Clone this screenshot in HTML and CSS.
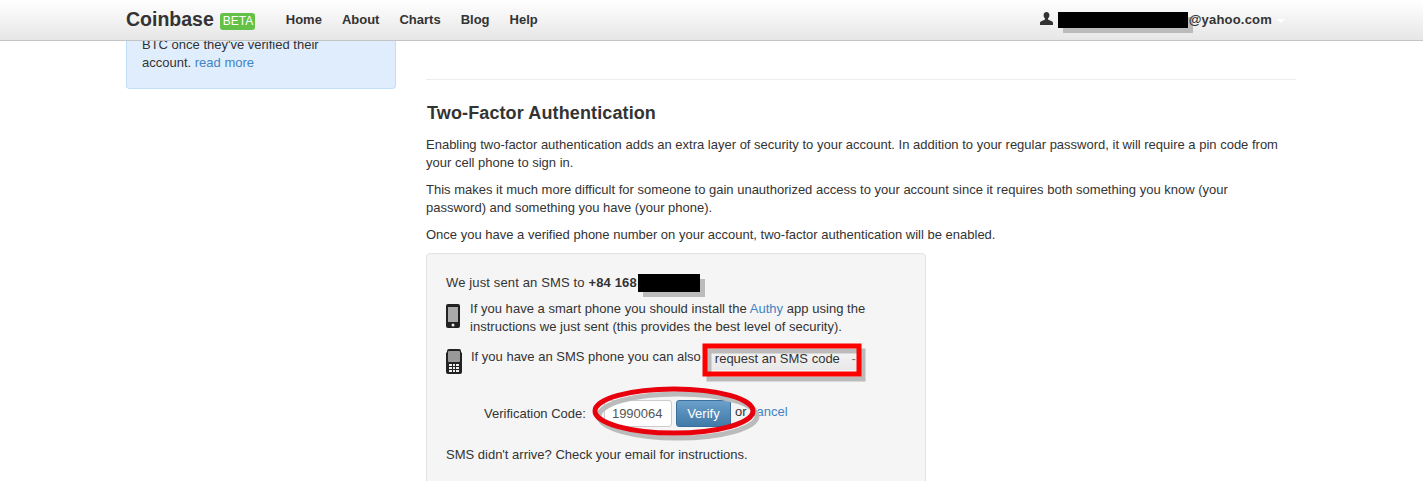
FILE: index.html
```html
<!DOCTYPE html>
<html lang="en">
<head>
<meta charset="utf-8">
<title>Coinbase</title>
<link rel="stylesheet" href="styles.css">
</head>
<body>
<header class="navbar">
  <div class="container nav-inner">
    <a class="brand">Coinbase</a>
    <span class="beta">BETA</span>
    <nav class="nav-links"><a>Home</a><a>About</a><a>Charts</a><a>Blog</a><a>Help</a></nav>
    <div class="user">
      <svg class="user-icon" width="13" height="13" viewBox="0 0 13 13"><path d="M6.500 0C4.600 0 3.600 1.400 3.600 3.300c0 1.300.5 2.500 1.400 3.200v1L.8 9.600C.3 9.900 0 10.300 0 10.900V13h13v-2.100c0-.6-.3-1-.8-1.300L8 7.500v-1c.9-.7 1.400-1.900 1.400-3.200C9.400 1.400 8.400 0 6.500 0z" fill="#333"/></svg>
      <span class="redact-wrap"></span><span class="email">@yahoo.com</span>
      <span class="caret"></span>
    </div>
  </div>
</header>
<div class="container page">
  <aside class="sidebar">
    <div class="info">BTC once they've verified their<br>account. <a>read more</a></div>
  </aside>
  <main class="main">
    <hr class="rule">
    <h2>Two-Factor Authentication</h2>
    <p>Enabling two-factor authentication adds an extra layer of security to your account. In addition to your regular password, it will require a pin code from your cell phone to sign in.</p>
    <p>This makes it much more difficult for someone to gain unauthorized access to your account since it requires both something you know (your password) and something you have (your phone).</p>
    <p>Once you have a verified phone number on your account, two-factor authentication will be enabled.</p>
    <section class="well">
      <div class="sent">We just sent an SMS to <b>+84 168</b><span class="redact-phone"></span></div>
      <div class="row smart">
        <svg width="14" height="24" viewBox="0 0 14 24"><rect width="14" height="24" rx="2" fill="#222"/><rect x="2" y="3" width="10" height="15" fill="#aaa"/><rect x="5.500" y="19.500" width="3" height="3" rx="1.500" fill="#eee"/></svg>
        <div>If you have a smart phone you should install the <a>Authy</a> app using the<br>instructions we just sent (this provides the best level of security).</div>
      </div>
      <div class="row sms">
        <svg width="16" height="25" viewBox="0 0 16 25"><path d="M3 0h10a2 2 0 0 1 2 2v1l1 1v19a2 2 0 0 1-2 2H2a2 2 0 0 1-2-2V4l1-1V2a2 2 0 0 1 2-2z" fill="#222"/><rect x="2" y="2" width="12" height="11" rx="1" fill="#999"/><path d="M3 15h10v8H3z" fill="#eee"/><path d="M6.500 15v8M9.500 15v8M3 17.500h10M3 20.500h10" stroke="#222"/></svg>
        <div class="sms-text">If you have an SMS phone you can also</div>
        <button class="sms-btn">request an SMS code<span class="sms-caret">-</span></button>
      </div>
      <div class="verify">
        <label class="code-label">Verification Code:</label>
        <span class="code">1990064</span>
        <button class="go">Verify</button>
        <span class="or">or <a>cancel</a></span>
      </div>
      <div class="arrive">SMS didn't arrive? Check your email for instructions.</div>
    </section>
  </main>
</div>
<svg class="marks" width="1423" height="481" viewBox="0 0 1423 481">
  <rect x="709" y="351" width="154" height="28" fill="none" stroke="#bbb" stroke-width="5"/>
  <rect x="705" y="346" width="154" height="28" fill="none" stroke="#f00" stroke-width="5"/>
  <ellipse cx="678" cy="416" rx="79" ry="22" fill="none" stroke="#bbb" stroke-width="5"/>
  <ellipse cx="674" cy="411" rx="79" ry="22" fill="none" stroke="#e8000c" stroke-width="5"/>
</svg>
</body>
</html>
```
FILE: styles.css
```css
* { box-sizing: border-box; }
html, body { margin: 0; height: 481px; overflow: hidden; }
body { background: #fff; color: #333; font: 13px/18px "Liberation Sans", Arial, sans-serif; position: relative; }
a { color: #4183c4; }
.container { width: 1170px; margin-left: 126px; }
.navbar { position: relative; z-index: 2; height: 41px; background: linear-gradient(#fff, #e6e6e6); border-bottom: 1px solid #c4c4c4; }
.nav-inner { display: flex; align-items: center; height: 40px; }
.brand { font-size: 19.500px; font-weight: bold; color: #333; margin-top: -3px; }
.beta { margin-left: 6px; background: #62c146; color: #fff; font-size: 12px; line-height: 17px; height: 17px; padding: 0 3px; border-radius: 3px; margin-top: 2px; width: 35px; }
.nav-links { display: flex; gap: 20px; margin-left: 31px; font-weight: bold; }
.nav-links a { color: #333; }
.user { margin-left: auto; margin-right: 24px; display: flex; align-items: center; font-weight: bold; color: #333; position: relative; margin-top: -1px; }
.user-icon { margin-right: 5px; margin-top: -3px; }
.redact-wrap { display: block; width: 130px; height: 16px; background: #000; box-shadow: 5px 5px 0 #bbb; }
.email { margin-left: 1px; letter-spacing: .2px; }
.caret { position: absolute; right: -13px; top: 8px; border: 4px solid transparent; border-top-color: #fff; }
.page { display: flex; gap: 30px; }
.sidebar { width: 270px; flex: none; }
.info { height: 53px; margin-top: -5px; padding: 0 15px; background: #e0edfd; border: 1px solid #bfe0fb; border-top: 0; border-radius: 0 0 4px 4px; }
.main { width: 870px; flex: none; }
.rule { margin: 38px 0 0; border: 0; border-top: 1px solid #eee; }
h2 { margin: 23px 0 13px 1px; font-size: 18px; line-height: 20px; color: #333; letter-spacing: .12px; }
p { margin: 0 0 9px; max-width: 860px; }
.well { width: 500px; height: 240px; margin-top: 7px; padding: 20px 19px; background: #f5f5f5; border: 1px solid #e3e3e3; border-radius: 4px; }
.sent { display: flex; height: 18px; white-space: pre; letter-spacing: .14px; }
.redact-phone { width: 62px; height: 18px; margin-left: 1px; background: #000; box-shadow: 5px 5px 0 #bbb; }
.row { display: flex; }
.smart { margin-top: 8px; gap: 10px; letter-spacing: .03px; }
.smart svg { margin-top: 4px; }
.sms { margin-top: 12px; }
.sms svg { margin-top: 1px; }
.sms-text { margin-left: 9px; }
.sms-btn { display: flex; justify-content: space-between; width: 147px; margin: 2px 0 0 10px; padding: 0 2px 0 4px; height: 20px; border: 0; background: linear-gradient(#f4f4f4, #e8e8e8); color: #333; font: inherit; }
.sms-caret { color: #777; }
.verify { display: flex; align-items: center; margin: 25px 0 0 38px; height: 28px; }
.code-label { margin-top: 2px; }
.code { width: 68px; height: 27px; margin-left: 18px; padding: 4px 7px; background: #fff; border: 1px solid #ccc; border-radius: 3px; color: #555; }
.go { width: 55px; height: 27px; margin-left: 4px; padding-top: 2px; border: 1px solid #3a6e9c; border-radius: 3px; background: linear-gradient(#6aa0c9, #4179a8); color: #fff; font: inherit; }
.or { margin-left: 4px; margin-top: -2px; }
.arrive { margin-top: 19px; }
.marks { position: absolute; left: 0; top: 0; z-index: 3; pointer-events: none; }
```
